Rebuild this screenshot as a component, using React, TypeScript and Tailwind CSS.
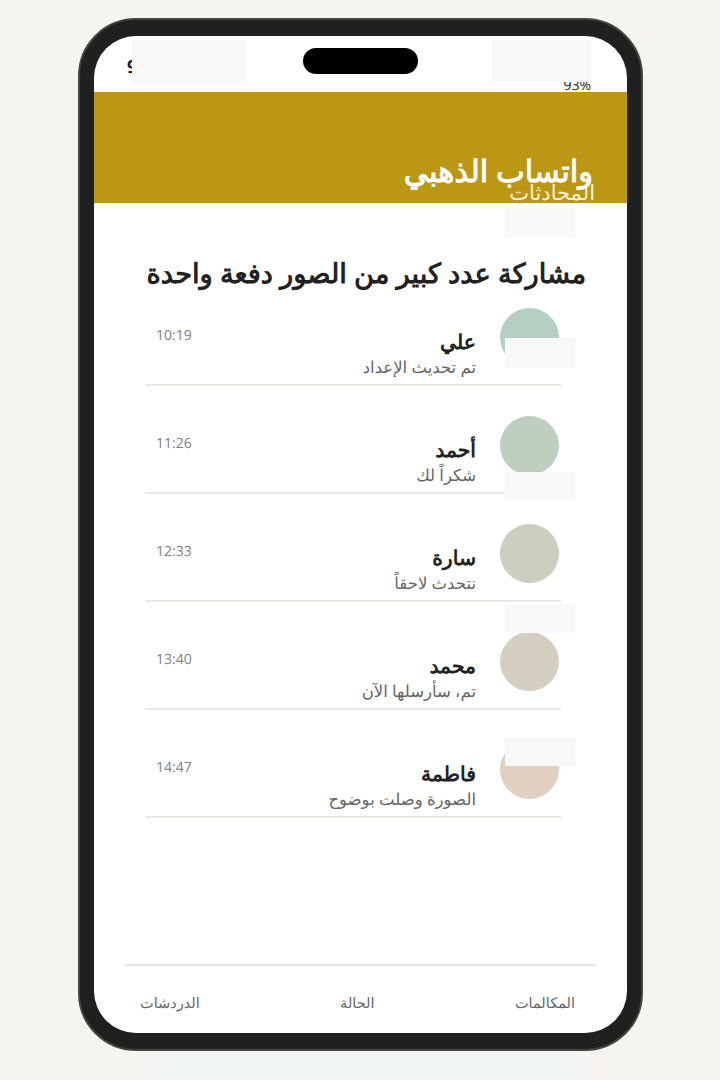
const chats = [
  { name: 'علي', msg: 'تم تحديث الإعداد', time: '10:19', color: 'bg-[#b5cfc3]' },
  { name: 'أحمد', msg: 'شكراً لك', time: '11:26', color: 'bg-[#bfcfbf]' },
  { name: 'سارة', msg: 'نتحدث لاحقاً', time: '12:33', color: 'bg-[#cbcfc0]' },
  { name: 'محمد', msg: 'تم، سأرسلها الآن', time: '13:40', color: 'bg-[#d4cfc0]' },
  { name: 'فاطمة', msg: 'الصورة وصلت بوضوح', time: '14:47', color: 'bg-[#e2cfc0]' },
];

function Patch({ className }: { className: string }) {
  return <div className={`absolute bg-[#f8f8f8] ${className}`} />;
}

export default function App() {
  return (
    <div
      dir="rtl"
      className="relative min-h-[1080px] overflow-hidden bg-[#f5f4f0] pt-[18px] font-['Open_Sans',sans-serif] [text-rendering:geometricPrecision]"
    >
      <div className="mr-[77px] h-[1033px] w-[565px] rounded-[58px] border-2 border-[#45453f] bg-[#1f211f] px-[14px] py-[16px]">
        <div className="relative flex h-full flex-col overflow-hidden rounded-[42px] bg-white">
          <div dir="ltr" className="flex h-[56px] shrink-0 justify-between pl-[33px] pr-[36px] text-[#222]">
            <span className="mt-[16px] text-[18px] font-bold leading-[30px]">9:41</span>
            <span className="mt-[40px] text-[14px] leading-[20px]">93%</span>
          </div>
          <div dir="ltr" className="absolute left-[209px] top-[12px] h-[26px] w-[115px] rounded-full bg-black" />

          <header className="relative flex h-[111px] shrink-0 flex-col justify-end bg-[#bc9713] pl-[34px] pr-[34px] text-white">
            <h1 className="-mb-[5px] text-[30.5px] font-bold leading-[34px]">واتساب الذهبي</h1>
            <p className="-mb-[1px] -mr-[2px] text-[21px] leading-[22px] text-[#fbf3d5]">المحادثات</p>
          </header>

          <main className="flex-1 pl-[51px] pr-[66px]">
            <h2 className="-mr-[25px] mt-[50px] whitespace-nowrap text-[27.3px] font-bold leading-[40px] text-[#222]">
              مشاركة عدد كبير من الصور دفعة واحدة
            </h2>
            <ul className="-mt-[15px]">
              {chats.map((c) => (
                <li key={c.name} className="flex h-[108px] items-start border-b-2 border-[#e8e8e5] pr-[2px] pt-[30px]">
                  <div className={`h-[59px] w-[59px] shrink-0 rounded-full ${c.color}`} />
                  <div className="mr-[24px] mt-[19px] flex-1">
                    <div className="text-[20.4px] font-bold leading-[28px] text-[#222]">{c.name}</div>
                    <div className="mt-[2px] text-[16.5px] leading-[20px] text-[#666]">{c.msg}</div>
                  </div>
                  <div className="ml-[11px] mt-[18px] text-[14px] leading-[20px] text-[#808080]">{c.time}</div>
                </li>
              ))}
            </ul>
          </main>

          <nav className="mx-[31px] flex h-[69px] shrink-0 items-start justify-between border-t-2 border-[#e5e5e5] pl-[15px] pr-[21px] pt-[26px] text-[14.5px] leading-[24px] text-[#666]">
            <span>المكالمات</span>
            <span>الحالة</span>
            <span>الدردشات</span>
          </nav>
        </div>
      </div>

      <Patch className="left-[132px] top-[40px] h-[43px] w-[114px]" />
      <Patch className="left-[492px] top-[40px] h-[42px] w-[99px]" />
      <Patch className="left-[505px] top-[208px] h-[29px] w-[70px]" />
      <Patch className="left-[505px] top-[338px] h-[30px] w-[70px]" />
      <Patch className="left-[505px] top-[472px] h-[28px] w-[70px]" />
      <Patch className="left-[505px] top-[604px] h-[29px] w-[70px]" />
      <Patch className="left-[505px] top-[738px] h-[28px] w-[70px]" />
      <div className="absolute left-[145px] top-[1052px] h-[28px] w-[435px] bg-[#f0f5f3]" />
    </div>
  );
}
